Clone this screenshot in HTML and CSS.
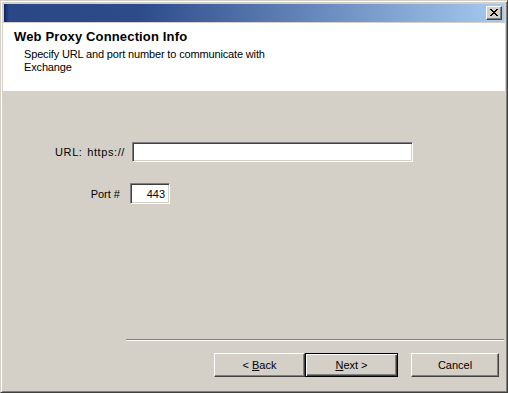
FILE: index.html
```html
<!DOCTYPE html>
<html>
<head>
<meta charset="utf-8">
<link rel="stylesheet" href="styles.css">
</head>
<body>
<div class="window">
  <div class="titlebar">
    <button class="close" aria-label="Close">
      <svg width="8" height="7" viewBox="0 0 8 7" shape-rendering="crispEdges">
        <path d="M0 0h2v1H0zM6 0h2v1H6zM1 1h2v1H1zM5 1h2v1H5zM2 2h4v1H2zM3 3h2v1H3zM2 4h4v1H2zM1 5h2v1H1zM5 5h2v1H5zM0 6h2v1H0zM6 6h2v1H6z" fill="#000"/>
      </svg>
    </button>
  </div>
  <div class="header">
    <div class="h-title">Web Proxy Connection Info</div>
    <div class="h-sub">Specify URL and port number to communicate with<br>Exchange</div>
  </div>
  <div class="content">
    <div class="row row-url">
      <span class="label label-url">URL: https://</span>
      <span class="field field-url"></span>
    </div>
    <div class="row row-port">
      <span class="label label-port">Port #</span>
      <span class="field field-port">443</span>
    </div>
    <div class="separator"></div>
    <div class="buttons">
      <button class="btn btn-back">&lt; <u>B</u>ack</button>
      <button class="btn btn-next default"><u>N</u>ext &gt;</button>
      <button class="btn btn-cancel">Cancel</button>
    </div>
  </div>
</div>
</body>
</html>
```

FILE: styles.css
```css
html, body {
  margin: 0;
  padding: 0;
  background: #d4d0c8;
}
body {
  font-family: "Liberation Sans", Arial, sans-serif;
  font-size: 11px;
  color: #000;
}
.window {
  width: 508px;
  height: 393px;
  box-sizing: border-box;
  border: 1px solid;
  border-color: #d4d0c8 #404040 #404040 #d4d0c8;
  box-shadow: inset 1px 1px #fff, inset -1px -1px #808080;
  background: #d4d0c8;
  padding: 3px 3px 3px 3px;
  display: flex;
  flex-direction: column;
}
.titlebar {
  height: 18px;
  flex: none;
  background: linear-gradient(to right, #0a246a 0px, #2a4888 5px, #2d4b8b 135px, #a6caf0 100%);
  display: flex;
  justify-content: flex-end;
  align-items: center;
  padding-right: 2px;
  margin-bottom: 1px;
}
.close {
  width: 16px;
  height: 14px;
  padding: 0;
  margin: 0;
  box-sizing: border-box;
  background: #d4d0c8;
  border: 1px solid;
  border-color: #fff #404040 #404040 #fff;
  box-shadow: inset -1px -1px #808080;
  display: flex;
  align-items: center;
  justify-content: center;
}
.close svg {
  display: block;
  margin: 0 1px 1px 0;
}
.header {
  height: 68px;
  flex: none;
  background: #fff;
  box-sizing: border-box;
  padding: 7px 0 0 11px;
  margin: 0 -1px 0 -1px;
}
.h-title {
  font-weight: bold;
  font-size: 13px;
  line-height: 14px;
  letter-spacing: 0.15px;
}
.h-sub {
  margin-top: 4px;
  padding-left: 10px;
  line-height: 13px;
  letter-spacing: -0.15px;
}
.content {
  flex: 1;
  display: flex;
  flex-direction: column;
}
.row {
  display: flex;
  align-items: center;
}
.row-url {
  margin-top: 51px;
}
.row-port {
  margin-top: 21px;
}
.label {
  text-align: right;
  flex: none;
}
.label-url {
  width: 121px;
  margin-right: 7px;
  letter-spacing: 0.6px;
  word-spacing: 1px;
}
.label-port {
  width: 116px;
  margin-right: 10px;
}
.field {
  display: block;
  box-sizing: border-box;
  background: #fff;
  border: 1px solid;
  border-color: #808080 #fff #fff #808080;
  box-shadow: inset 1px 1px #404040, inset -1px -1px #d4d0c8;
}
.field-url {
  width: 281px;
  height: 20px;
}
.field-port {
  width: 40px;
  height: 21px;
  text-align: right;
  padding: 3px 4px 0 0;
  line-height: 14px;
}
.separator {
  margin-top: auto;
  margin-left: 122px;
  height: 1px;
  border-top: 1px solid #808080;
  background: #fff;
}
.buttons {
  display: flex;
  margin: 12px 0 12px 210px;
}
.btn {
  font-family: inherit;
  font-size: 11px;
  height: 24px;
  box-sizing: border-box;
  background: #d4d0c8;
  border: 1px solid;
  border-color: #fff #404040 #404040 #fff;
  box-shadow: inset -1px -1px #808080;
  padding: 0;
  margin: 0;
  color: #000;
}
.btn-back {
  width: 91px;
}
.btn-next {
  width: 93px;
}
.btn-cancel {
  width: 88px;
  margin-left: 13px;
}
.btn.default {
  border: 1px solid #000;
  box-shadow: inset 1px 1px #fff, inset -1px -1px #404040, inset -2px -2px #808080;
}
```
